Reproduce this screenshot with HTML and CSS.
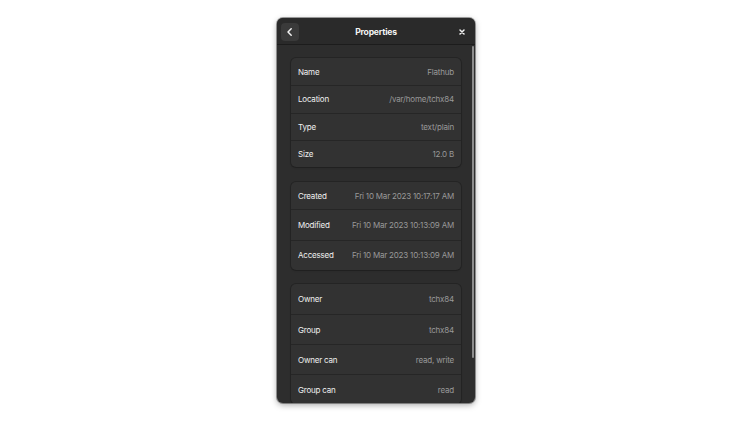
FILE: index.html
```html
<!DOCTYPE html>
<html>
<head>
<meta charset="utf-8">
<link rel="stylesheet" href="styles.css">
</head>
<body>
<div class="window">
  <div class="header">
    <button class="back" aria-label="Back">
      <svg width="10" height="10" viewBox="0 0 10 10"><path d="M6.2 1.8 L3 5 L6.2 8.2" fill="none" stroke="#f2f2f2" stroke-width="1.5" stroke-linecap="round" stroke-linejoin="round"/></svg>
    </button>
    <div class="title">Properties</div>
    <div class="close" aria-label="Close">
      <svg width="8" height="8" viewBox="0 0 8 8"><path d="M2 2 L6 6 M6 2 L2 6" stroke="#f2f2f2" stroke-width="1.5" stroke-linecap="round"/></svg>
    </div>
  </div>
  <div class="content">
    <div class="card card-a">
      <div class="row"><span class="label">Name</span><span class="value">Flathub</span></div>
      <div class="row"><span class="label">Location</span><span class="value">/var/home/tchx84</span></div>
      <div class="row"><span class="label">Type</span><span class="value">text/plain</span></div>
      <div class="row"><span class="label">Size</span><span class="value">12.0 B</span></div>
    </div>
    <div class="card card-b">
      <div class="row"><span class="label">Created</span><span class="value">Fri 10 Mar 2023 10:17:17 AM</span></div>
      <div class="row"><span class="label">Modified</span><span class="value">Fri 10 Mar 2023 10:13:09 AM</span></div>
      <div class="row"><span class="label">Accessed</span><span class="value">Fri 10 Mar 2023 10:13:09 AM</span></div>
    </div>
    <div class="card card-c">
      <div class="row"><span class="label">Owner</span><span class="value">tchx84</span></div>
      <div class="row"><span class="label">Group</span><span class="value">tchx84</span></div>
      <div class="row"><span class="label">Owner can</span><span class="value">read, write</span></div>
      <div class="row"><span class="label">Group can</span><span class="value">read</span></div>
    </div>
  </div>
  <div class="scrollbar"></div>
</div>
</body>
</html>
```
FILE: styles.css
```css
* { box-sizing: border-box; }
html, body { margin: 0; padding: 0; background: #ffffff; }
body {
  font-family: "Inter", "Noto Sans", sans-serif;
  height: 423px;
  overflow: hidden;
}
.window {
  position: relative;
  width: 198px;
  height: 385px;
  margin: 18px auto 0;
  background: #2d2d2d;
  border-radius: 6px;
  overflow: hidden;
  box-shadow: 0 0 0 1px rgba(0,0,0,0.35), 0 2px 6px rgba(0,0,0,0.35);
}
.header {
  height: 27px;
  display: flex;
  align-items: center;
  padding: 1px 4px 0;
  background: #2a2a2a;
  border-bottom: 1px solid #1c1c1c;
}
.back {
  width: 18px;
  height: 18px;
  padding: 0;
  border: none;
  border-radius: 4px;
  background: #3a3a3a;
  display: flex;
  align-items: center;
  justify-content: center;
}
.title {
  flex: 1;
  text-align: center;
  color: #f4f4f4;
  font-weight: 700;
  font-size: 8.6px;
  letter-spacing: -0.2px;
}
.close {
  width: 18px;
  height: 18px;
  display: flex;
  align-items: center;
  justify-content: center;
}
.content {
  padding: 13px 14px 0;
  display: flex;
  flex-direction: column;
  gap: 15px;
}
.card {
  background: #323232;
  border-radius: 5px;
  box-shadow: 0 0 0 1px rgba(0,0,0,0.18), 0 1px 2px rgba(0,0,0,0.15);
  flex-shrink: 0;
}
.row {
  display: flex;
  align-items: center;
  justify-content: space-between;
  padding: 0 7px;
  font-size: 8px;
  letter-spacing: -0.2px;
  border-top: 1px solid #262626;
}
.row:first-child { border-top: none; }
.card-a .row { height: 27.25px; }
.card-b .row { height: 30.5px; }
.card-b .row:first-child { height: 27px; }
.card-c { margin-top: -1px; }
.card-c .row { height: 30px; }
.label { color: #f0f0f0; }
.value { color: #999999; }
.scrollbar {
  position: absolute;
  left: 195px;
  top: 28px;
  width: 2px;
  height: 312px;
  border-radius: 1px;
  background: #8c8c8c;
}
```
